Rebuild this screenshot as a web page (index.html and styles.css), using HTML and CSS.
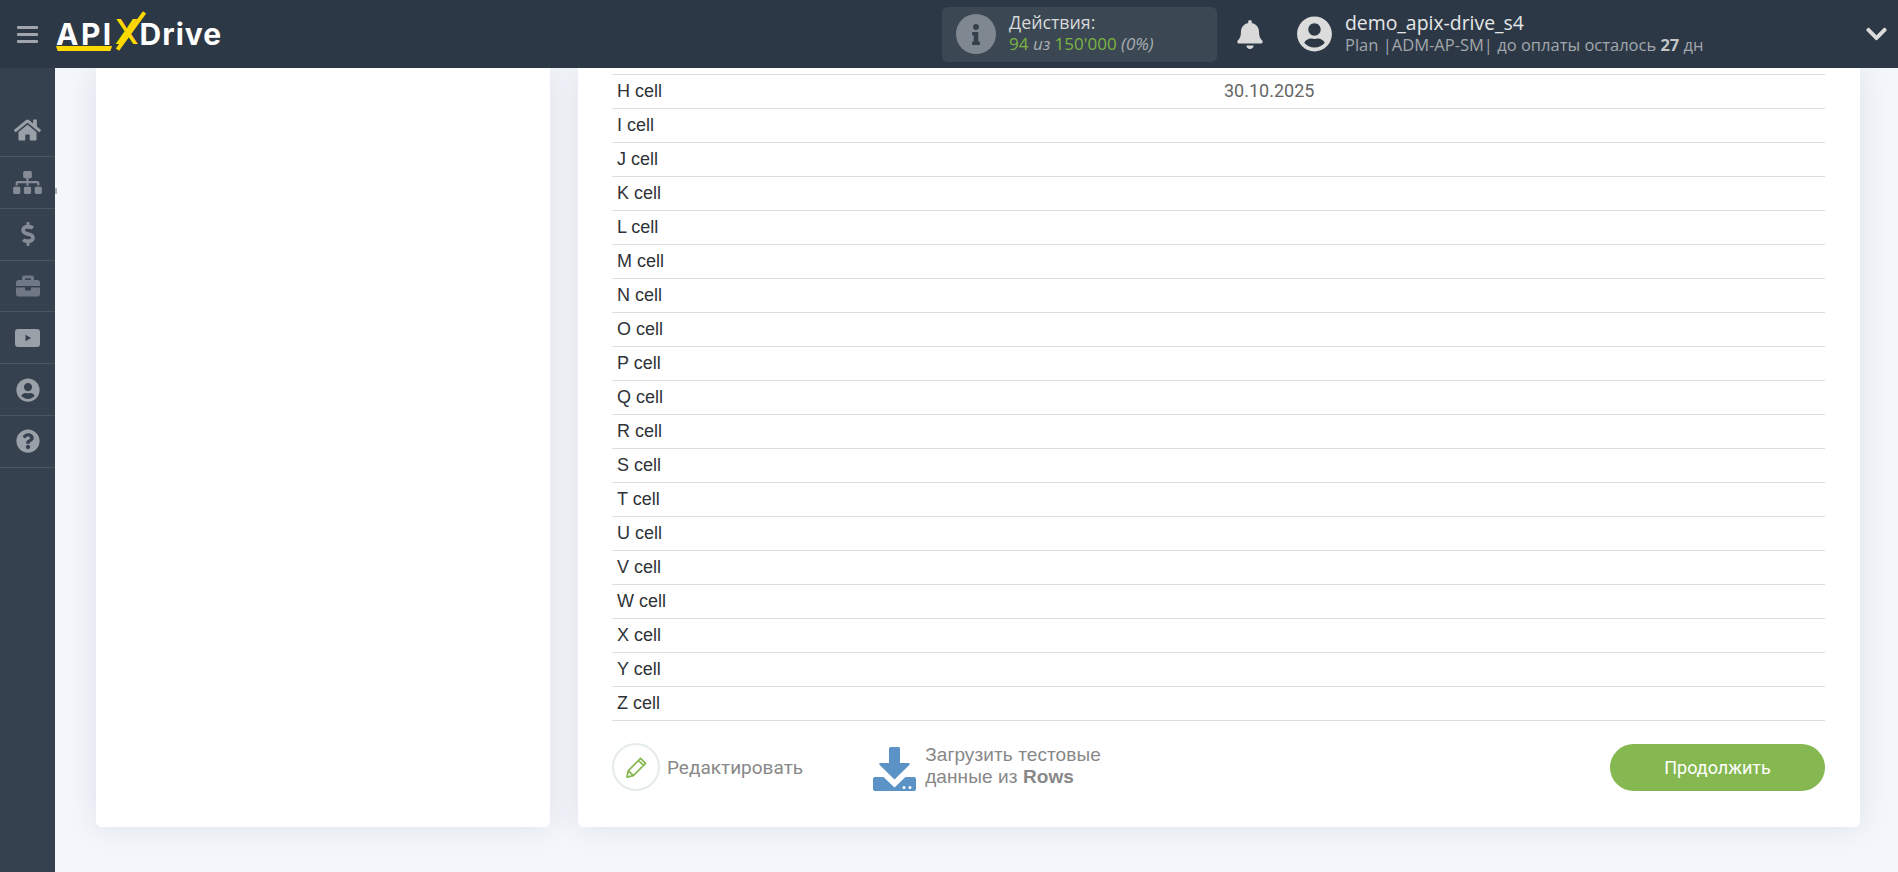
FILE: index.html
```html
<!DOCTYPE html>
<html lang="ru">
<head>
<meta charset="utf-8">
<title>ApiX-Drive</title>
<link rel="stylesheet" href="styles.css">
</head>
<body>
<header class="topbar">
  <div class="burger"><span></span><span></span><span></span></div>
  <div class="logo"><span class="logo-api">API</span><span class="logo-x">X</span><span class="logo-drive">Drive</span></div>
  <div class="stats">
    <div class="stats-icon"><svg viewBox="0 0 192 512"><path d="M20 424.229h20V279.771H20c-11.046 0-20-8.954-20-20V212c0-11.046 8.954-20 20-20h112c11.046 0 20 8.954 20 20v212.229h20c11.046 0 20 8.954 20 20V492c0 11.046-8.954 20-20 20H20c-11.046 0-20-8.954-20-20v-47.771c0-11.046 8.954-20 20-20zM96 0C56.235 0 24 32.235 24 72s32.235 72 72 72 72-32.235 72-72S135.764 0 96 0z"/></svg></div>
    <div class="stats-text">
      <div class="stats-title">Действия:</div>
      <div class="stats-value"><b>94</b> <i>из</i> <b>150'000</b> <i>(0%)</i></div>
    </div>
  </div>
  <svg class="bell" viewBox="0 0 448 512"><path d="M224 512c35.32 0 63.97-28.65 63.97-64H160.03c0 35.35 28.65 64 63.97 64zm215.39-149.71c-19.32-20.76-55.47-51.99-55.47-154.29 0-77.7-54.48-139.9-127.94-155.16V32c0-17.67-14.32-32-31.98-32s-31.98 14.33-31.98 32v20.84C118.56 68.1 64.08 130.3 64.08 208c0 102.3-36.15 133.53-55.47 154.29-6 6.45-8.66 14.16-8.61 21.71.11 16.4 12.98 32 32.1 32h383.8c19.12 0 32-15.6 32.1-32 .05-7.55-2.61-15.27-8.61-21.71z"/></svg>
  <svg class="avatar" viewBox="0 0 496 512"><path d="M248 8C111 8 0 119 0 256s111 248 248 248 248-111 248-248S385 8 248 8zm0 96c48.6 0 88 39.4 88 88s-39.4 88-88 88-88-39.4-88-88 39.4-88 88-88zm0 344c-58.7 0-111.3-26.6-146.5-68.2 18.8-35.4 55.6-59.8 98.5-59.8 2.4 0 4.8.4 7.1 1.1 13 4.2 26.6 6.9 40.9 6.9 14.3 0 28-2.7 40.9-6.9 2.3-.7 4.7-1.1 7.1-1.1 42.9 0 79.7 24.4 98.5 59.8C359.3 421.4 306.7 448 248 448z"/></svg>
  <div class="user">
    <div class="user-name">demo_apix-drive_s4</div>
    <div class="user-plan">Plan |ADM-AP-SM| до оплаты осталось <b>27</b> дн</div>
  </div>
  <svg class="chevron" viewBox="0 0 448 512"><path d="M207.029 381.476L12.686 187.132c-9.373-9.373-9.373-24.569 0-33.941l22.667-22.667c9.357-9.357 24.522-9.375 33.901-.04L224 284.505l154.745-154.021c9.379-9.335 24.544-9.317 33.901.04l22.667 22.667c9.373 9.373 9.373 24.569 0 33.941L240.971 381.476c-9.373 9.372-24.569 9.372-33.942 0z"/></svg>
</header>
<div class="layout">
  <nav class="sidebar">
    <a class="nav-item"><svg class="nav-home" viewBox="0 0 576 512"><path d="M280.37 148.26L96 300.11V464a16 16 0 0 0 16 16l112.06-.29a16 16 0 0 0 15.92-16V368a16 16 0 0 1 16-16h64a16 16 0 0 1 16 16v95.64a16 16 0 0 0 16 16.05L464 480a16 16 0 0 0 16-16V300L295.67 148.26a12.19 12.19 0 0 0-15.3 0zM571.6 251.47L488 182.56V44.05a12 12 0 0 0-12-12h-56a12 12 0 0 0-12 12v72.61L318.47 43a48 48 0 0 0-61 0L4.34 251.47a12 12 0 0 0-1.6 16.9l25.5 31A12 12 0 0 0 45.15 301l235.22-193.74a12.19 12.19 0 0 1 15.3 0L530.9 301a12 12 0 0 0 16.9-1.6l25.5-31a12 12 0 0 0-1.7-16.93z"/></svg></a>
    <a class="nav-item nav-tick nav-dim"><svg class="nav-map" viewBox="0 0 640 512"><path d="M128 352H32c-17.67 0-32 14.33-32 32v96c0 17.67 14.33 32 32 32h96c17.67 0 32-14.33 32-32v-96c0-17.67-14.33-32-32-32zm-24-80h192v48h48v-48h192v48h48v-57.59c0-21.17-17.23-38.41-38.41-38.41H344v-64h40c17.67 0 32-14.33 32-32V32c0-17.67-14.33-32-32-32H256c-17.67 0-32 14.33-32 32v96c0 17.67 14.33 32 32 32h40v64H94.41C73.23 224 56 241.23 56 262.41V320h48v-48zm264 80h-96c-17.67 0-32 14.33-32 32v96c0 17.67 14.33 32 32 32h96c17.67 0 32-14.33 32-32v-96c0-17.67-14.33-32-32-32zm240 0h-96c-17.67 0-32 14.33-32 32v96c0 17.67 14.33 32 32 32h96c17.67 0 32-14.33 32-32v-96c0-17.67-14.33-32-32-32z"/></svg></a>
    <a class="nav-item nav-dim"><svg class="nav-dollar" viewBox="0 0 288 512"><path d="M209.2 233.4l-108-31.6C88.7 198.2 80 186.5 80 173.5c0-16.3 13.2-29.5 29.5-29.5h66.3c12.2 0 24.2 3.7 34.2 10.5 6.1 4.1 14.3 3.1 19.5-2l34.8-34c7.1-6.9 6.1-18.4-1.8-24.5C238 74.8 207.4 64.1 176 64V16c0-8.8-7.2-16-16-16h-32c-8.8 0-16 7.2-16 16v48h-2.5C45.8 64-5.4 118.7.5 183.6c4.2 46.1 39.4 83.6 83.8 96.6l102.5 30c12.5 3.7 21.2 15.3 21.2 28.3 0 16.3-13.2 29.5-29.5 29.5h-66.3C100 368 88 364.3 78 357.5c-6.1-4.1-14.3-3.1-19.5 2l-34.8 34c-7.1 6.9-6.1 18.4 1.8 24.5 24.5 19.2 55.1 29.9 86.5 30v48c0 8.8 7.2 16 16 16h32c8.8 0 16-7.2 16-16v-48.2c46.6-.9 90.3-28.6 105.7-72.7 21.5-61.6-14.6-124.8-72.5-141.7z"/></svg></a>
    <a class="nav-item nav-dimmer"><svg class="nav-case" viewBox="0 0 512 512"><path d="M320 336c0 8.84-7.16 16-16 16h-96c-8.84 0-16-7.16-16-16v-48H0v144c0 25.6 22.4 48 48 48h416c25.6 0 48-22.4 48-48V288H320v48zm144-208h-80V80c0-25.6-22.4-48-48-48H176c-25.6 0-48 22.4-48 48v48H48c-25.6 0-48 22.4-48 48v80h512v-80c0-25.6-22.4-48-48-48zm-144 0H192V96h128v32z"/></svg></a>
    <a class="nav-item"><svg class="nav-yt" viewBox="0 0 25 18"><path fill-rule="evenodd" d="M3 0h19a3 3 0 0 1 3 3v12a3 3 0 0 1-3 3H3a3 3 0 0 1-3-3V3a3 3 0 0 1 3-3zm7.500 5.800v6.400L16 9z"/></svg></a>
    <a class="nav-item"><svg class="nav-user" viewBox="0 0 496 512"><path d="M248 8C111 8 0 119 0 256s111 248 248 248 248-111 248-248S385 8 248 8zm0 96c48.6 0 88 39.4 88 88s-39.4 88-88 88-88-39.4-88-88 39.4-88 88-88zm0 344c-58.7 0-111.3-26.6-146.5-68.2 18.8-35.4 55.6-59.8 98.5-59.8 2.4 0 4.8.4 7.1 1.1 13 4.2 26.6 6.9 40.9 6.9 14.3 0 28-2.7 40.9-6.9 2.3-.7 4.7-1.1 7.1-1.1 42.9 0 79.7 24.4 98.5 59.8C359.3 421.4 306.7 448 248 448z"/></svg></a>
    <a class="nav-item"><svg class="nav-user" viewBox="0 0 512 512"><path d="M504 256c0 136.997-111.043 248-248 248S8 392.997 8 256C8 119.083 119.043 8 256 8s248 111.083 248 248zM262.655 90c-54.497 0-89.255 22.957-116.549 63.758-3.536 5.286-2.353 12.415 2.715 16.258l34.699 26.31c5.205 3.947 12.621 3.008 16.665-2.122 17.864-22.658 30.113-35.797 57.303-35.797 20.429 0 45.698 13.148 45.698 32.958 0 14.976-12.363 22.667-32.534 33.976C247.128 238.528 216 254.941 216 296v4c0 6.627 5.373 12 12 12h56c6.627 0 12-5.373 12-12v-1.333c0-28.462 83.186-29.647 83.186-106.667 0-58.002-60.165-102-116.531-102zM256 338c-25.365 0-46 20.635-46 46 0 25.364 20.635 46 46 46s46-20.636 46-46c0-25.365-20.635-46-46-46z"/></svg></a>
  </nav>
  <main class="content">
    <section class="panel"></section>
    <section class="panel panel-main">
      <div class="rows">
        <div class="row"><span>H cell</span><span class="val">30.10.2025</span></div>
        <div class="row"><span>I cell</span></div>
        <div class="row"><span>J cell</span></div>
        <div class="row"><span>K cell</span></div>
        <div class="row"><span>L cell</span></div>
        <div class="row"><span>M cell</span></div>
        <div class="row"><span>N cell</span></div>
        <div class="row"><span>O cell</span></div>
        <div class="row"><span>P cell</span></div>
        <div class="row"><span>Q cell</span></div>
        <div class="row"><span>R cell</span></div>
        <div class="row"><span>S cell</span></div>
        <div class="row"><span>T cell</span></div>
        <div class="row"><span>U cell</span></div>
        <div class="row"><span>V cell</span></div>
        <div class="row"><span>W cell</span></div>
        <div class="row"><span>X cell</span></div>
        <div class="row"><span>Y cell</span></div>
        <div class="row"><span>Z cell</span></div>
      </div>
      <div class="actions">
        <a class="edit">
          <span class="edit-circle"><svg viewBox="0 0 22 22"><path d="M2.6 19.4l1.2-5.6L14.6 3l4.4 4.4L8.2 18.2zM3.8 13.8l4.4 4.4M12.8 4.8l4.4 4.4" fill="none" stroke="#86b851" stroke-width="1.5" stroke-linejoin="round"/></svg></span>
          <span>Редактировать</span>
        </a>
        <a class="load">
          <svg class="load-icon" viewBox="0 0 43 45"><path d="M17.5 1h8a1.500 1.500 0 0 1 1.500 1.500V17h8.800a1 1 0 0 1 .7 1.700L21.500 33.500 6.500 18.700A1 1 0 0 1 7.200 17H16V2.500A1.500 1.500 0 0 1 17.500 1z" fill="#5b93c7"/><path fill-rule="evenodd" d="M2 31h8.500l11 10.500 11-10.500H41a2 2 0 0 1 2 2v10a2 2 0 0 1-2 2H2a2 2 0 0 1-2-2V33a2 2 0 0 1 2-2zm29 9a1.500 1.500 0 1 0 0 3 1.500 1.500 0 0 0 0-3zm6 0a1.500 1.500 0 1 0 0 3 1.500 1.500 0 0 0 0-3z" fill="#5b93c7"/></svg>
          <span class="load-text">Загрузить тестовые<br>данные из <b>Rows</b></span>
        </a>
        <button class="next">Продолжить</button>
      </div>
    </section>
  </main>
</div>
</body>
</html>
```

FILE: styles.css
```css
* { box-sizing: border-box; }
html, body { margin: 0; height: 100%; overflow: hidden; }
body {
  display: flex;
  flex-direction: column;
  background: #f3f6fb;
  font-family: "Liberation Sans", Arial, sans-serif;
}
.topbar {
  flex: 0 0 68px;
  display: flex;
  align-items: center;
  background: #2d3846;
  position: relative;
  z-index: 2;
}
.burger {
  width: 21px;
  margin-left: 17px;
  display: flex;
  flex-direction: column;
  gap: 4px;
}
.burger span { display: block; height: 3px; background: #a2a6ac; border-radius: 1px; }
.logo {
  position: relative;
  width: 165px;
  margin-left: 18px;
  height: 44px;
  display: flex;
  align-items: center;
  font-family: Inter, "Liberation Sans", sans-serif;
  font-weight: 700;
  color: #fff;
  font-size: 30px;
}
.logo::after {
  content: "";
  position: absolute;
  left: 0;
  bottom: 5px;
  width: 56px;
  height: 5px;
  background: #ffd800;
  clip-path: polygon(0 0, 100% 0, 97% 100%, 3% 100%);
}
.logo-api { letter-spacing: 2.5px; }
.logo-drive { letter-spacing: 1px; }
.logo-x {
  position: relative;
  color: #ffd800;
  font-size: 34px;
  font-weight: 500;
  margin: -4px 1px 0 1px;
  line-height: 1;
}
.logo-x::before {
  content: "";
  position: absolute;
  left: -7px;
  top: 14px;
  width: 46px;
  height: 4px;
  background: #ffd800;
  transform: rotate(-54deg);
}
.stats {
  margin-left: 721px;
  width: 275px;
  height: 55px;
  background: #3b4853;
  border-radius: 6px;
  display: flex;
  align-items: center;
  padding-left: 14px;
  font-family: "Open Sans", sans-serif;
}
.stats-icon {
  width: 40px;
  height: 40px;
  border-radius: 50%;
  background: #7f8890;
  display: flex;
  align-items: center;
  justify-content: center;
}
.stats-icon svg { height: 21px; width: 10px; fill: #343f4b; }
.stats-text { margin-left: 13px; }
.stats-title { font-size: 17.800px; line-height: 22px; color: #d6d8da; margin-top: -3px; }
.stats-value { font-size: 17px; line-height: 22px; color: #a9adb1; }
.stats-value b { font-weight: 400; color: #7cb342; }
.bell { width: 26px; height: 29px; margin-left: 20px; fill: #d9d9d9; }
.avatar { width: 35px; height: 36px; margin-left: 34px; fill: #dcdcdc; }
.user { margin-left: 13px; font-family: "Open Sans", sans-serif; width: 521px; }
.user-name { font-size: 19.400px; line-height: 24px; color: #e6e7e8; margin-top: -2px; }
.user-plan { font-size: 16.500px; line-height: 20px; color: #a2a7ab; }
.user-plan b { font-weight: 700; color: #c4c6c8; }
.chevron { width: 21px; height: 24px; fill: #dcdcdc; }
.layout { flex: 1; display: flex; min-height: 0; }
.sidebar {
  flex: 0 0 55px;
  background: #364150;
  padding-top: 37px;
}
.nav-item {
  position: relative;
  height: 51.850px;
  display: flex;
  align-items: center;
  justify-content: center;
  border-bottom: 1px solid #4a5562;
}
.nav-item svg { fill: #9aa0a7; }
.nav-dim svg { fill: #858c95; }
.nav-dimmer svg { fill: #6f7884; }
.nav-tick::after {
  content: "";
  position: absolute;
  right: -2px;
  top: 31px;
  width: 2px;
  height: 6px;
  background: #aab0b8;
}
.nav-home { width: 27px; height: 24px; }
.nav-map { width: 29px; height: 23px; }
.nav-dollar { width: 14px; height: 24px; }
.nav-case { width: 24px; height: 24px; }
.nav-yt { width: 25px; height: 18px; }
.nav-user { width: 24px; height: 24px; }
.content {
  flex: 1;
  display: grid;
  grid-template-columns: 454px 1282px;
  column-gap: 28px;
  padding: 0 38px 45px 41px;
  overflow: hidden;
  min-width: 0;
}
.panel {
  background: #fff;
  border-radius: 0 0 6px 6px;
  box-shadow: 0 0 30px rgba(40, 50, 70, 0.1);
}
.panel-main { padding: 6px 35px 0 34px; }
.rows { border-top: 1px solid #dedede; }
.row {
  display: grid;
  grid-template-columns: 607px 1fr;
  height: 34px;
  align-items: center;
  padding-left: 5px;
  border-bottom: 1px solid #dedede;
  font-size: 18px;
  color: #2f3338;
}
.val { font-family: Roboto, sans-serif; color: #666; font-size: 18px; margin-top: -2px; }
.actions {
  display: flex;
  align-items: center;
  margin-top: 22px;
  height: 48px;
  font-size: 19px;
  color: #888;
}
.edit { display: flex; align-items: center; font-family: Roboto, sans-serif; }
.edit-circle {
  width: 48px;
  height: 48px;
  border: 2px solid #e4ebea;
  border-radius: 50%;
  display: flex;
  align-items: center;
  justify-content: center;
  margin-right: 7px;
}
.edit-circle svg { width: 25px; height: 25px; }
.load { display: flex; align-items: center; margin-left: 70px; }
.load-icon { width: 43px; height: 45px; margin-top: 3px; }
.load-text { margin-left: 9px; line-height: 22px; letter-spacing: 0.1px; margin-top: -2px; }
.next {
  margin-left: auto;
  width: 215px;
  height: 47px;
  border: 0;
  border-radius: 24px;
  background: #86b851;
  color: #fff;
  font-family: Roboto, sans-serif;
  font-size: 18px;
  font-weight: 400;
}
```
